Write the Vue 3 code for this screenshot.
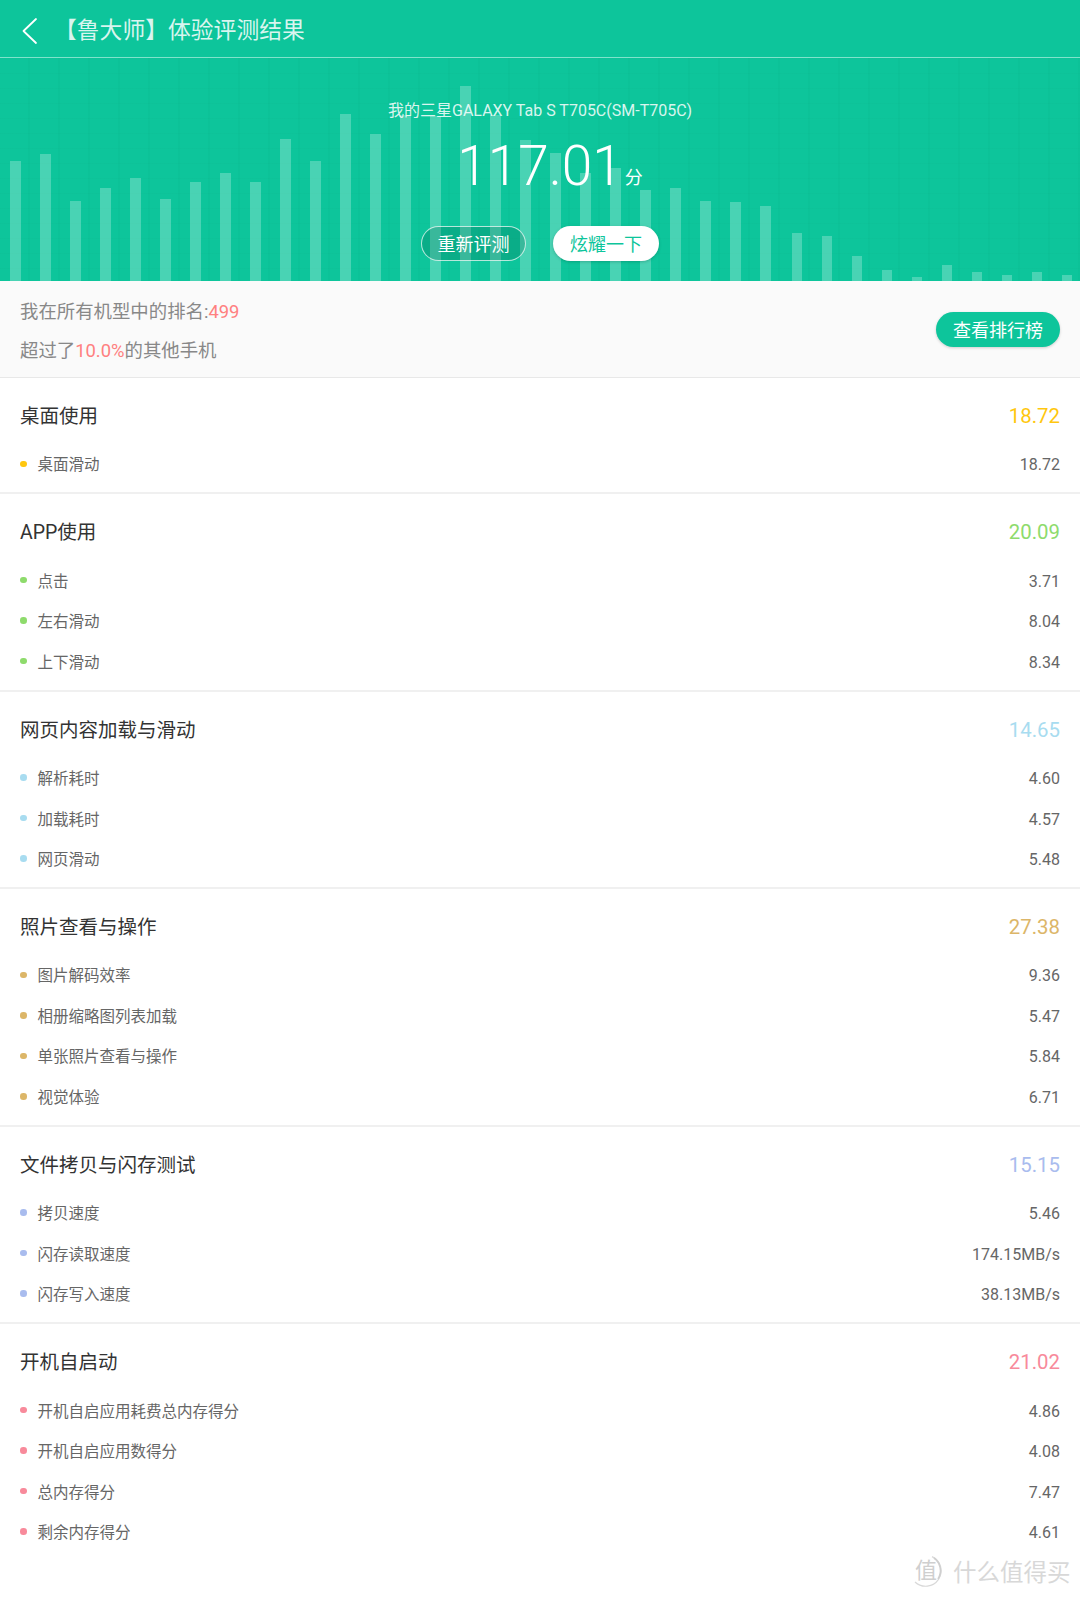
<script setup>
const tops = [161,154,201,188,178,199,182,173,182,139,161,114,134,115,116,86,115,140,153,173,168,190,188,201,202,206,233,236,256,270,277,265,272,275,272,275]
const bars = tops.map((t, i) => ({
  left: 10.3 + i * 30 + (i >= 26 ? 1.6 : 0),
  height: 281 - t
}))
const sections = [
  { name: '桌面使用', score: '18.72', color: '#ffc70f', items: [['桌面滑动', '18.72']] },
  { name: 'APP使用', score: '20.09', color: '#8edb6c', items: [['点击', '3.71'], ['左右滑动', '8.04'], ['上下滑动', '8.34']] },
  { name: '网页内容加载与滑动', score: '14.65', color: '#a8dcf0', items: [['解析耗时', '4.60'], ['加载耗时', '4.57'], ['网页滑动', '5.48']] },
  { name: '照片查看与操作', score: '27.38', color: '#dcb668', items: [['图片解码效率', '9.36'], ['相册缩略图列表加载', '5.47'], ['单张照片查看与操作', '5.84'], ['视觉体验', '6.71']] },
  { name: '文件拷贝与闪存测试', score: '15.15', color: '#a9bcee', items: [['拷贝速度', '5.46'], ['闪存读取速度', '174.15MB/s'], ['闪存写入速度', '38.13MB/s']] },
  { name: '开机自启动', score: '21.02', color: '#f88a9b', items: [['开机自启应用耗费总内存得分', '4.86'], ['开机自启应用数得分', '4.08'], ['总内存得分', '7.47'], ['剩余内存得分', '4.61']] }
]
</script>

<template>
  <div class="page">
    <header class="topbar">
      <svg class="back" width="18" height="28" viewBox="0 0 18 28" fill="none">
        <path d="M15 2 L2.5 14 L15 26" stroke="#fff" stroke-width="1.8" stroke-linecap="round" stroke-linejoin="round" />
      </svg>
      <span class="topbar-title">【鲁大师】体验评测结果</span>
    </header>

    <section class="hero">
      <div class="grid"></div>
      <div v-for="(b, i) in bars" :key="i" class="bar" :style="{ left: b.left + 'px', height: b.height + 'px' }"></div>
      <div class="hero-content">
        <div class="device">我的三星GALAXY Tab S T705C(SM-T705C)</div>
        <div class="score">117.01<span class="unit">分</span></div>
        <div class="hero-actions">
          <button class="pill pill-ghost">重新评测</button>
          <button class="pill pill-white">炫耀一下</button>
        </div>
      </div>
    </section>

    <section class="rank">
      <div class="rank-text">
        <div>我在所有机型中的排名:<span class="hot">499</span></div>
        <div>超过了<span class="hot">10.0%</span>的其他手机</div>
      </div>
      <button class="pill pill-green">查看排行榜</button>
    </section>

    <section v-for="s in sections" :key="s.name" class="group">
      <div class="group-head">
        <span class="group-name">{{ s.name }}</span>
        <span class="group-score" :style="{ color: s.color }">{{ s.score }}</span>
      </div>
      <div v-for="it in s.items" :key="it[0]" class="row">
        <span class="dot" :style="{ background: s.color }"></span>
        <span class="row-name">{{ it[0] }}</span>
        <span class="row-val">{{ it[1] }}</span>
      </div>
    </section>

    <div class="watermark">
      <svg class="wm-logo" width="36" height="36" viewBox="0 0 36 36" fill="none">
        <path d="M24 3.6 A15.5 15.5 0 1 1 7 29" stroke="#d9d9d9" stroke-width="1.2" />
        <path d="M26 5 A15.5 15.5 0 0 1 30 26" stroke="#cfcfcf" stroke-width="1.6" />
      </svg>
      <span class="wm-zhi">值</span>
      <span class="wm-text">什么值得买</span>
    </div>
  </div>
</template>

<style>
html, body { margin: 0; background: #fff; }
</style>

<style scoped>
.page {
  position: relative;
  width: 1080px;
  height: 1598px;
  overflow: hidden;
  background: #fff;
  font-family: Roboto, "Noto Sans CJK SC", sans-serif;
}
.topbar {
  display: flex;
  align-items: center;
  height: 57px;
  padding-left: 21px;
  background: #0dc59b;
  border-bottom: 1px solid #7fe3cb;
}
.back {
  flex: none;
  margin-top: 5px;
}
.topbar-title {
  margin-left: 15px;
  padding-top: 4px;
  font-size: 22.8px;
  line-height: 56px;
  color: rgba(255, 255, 255, 0.85);
}
.hero {
  position: relative;
  height: 223px;
  background: #0dc59b;
  overflow: hidden;
}
.grid {
  position: absolute;
  inset: 0;
  background-image:
    linear-gradient(90deg, transparent 0 28px, rgba(0, 120, 90, 0.045) 28px 30px),
    linear-gradient(0deg, transparent 0 14px, rgba(0, 120, 90, 0.03) 14px 15px);
  background-size: 30px 100%, 100% 15px;
}
.bar {
  position: absolute;
  bottom: 0;
  width: 10.6px;
  background: rgba(255, 255, 255, 0.25);
}
.hero-content {
  position: relative;
  display: flex;
  flex-direction: column;
  align-items: center;
  padding-top: 41px;
}
.device {
  font-size: 16px;
  line-height: 24px;
  color: rgba(255, 255, 255, 0.85);
}
.score {
  position: relative;
  margin-top: 12px;
  font-size: 55px;
  font-weight: 300;
  line-height: 62px;
  color: #fff;
}
.unit {
  position: absolute;
  left: 100%;
  bottom: 7px;
  margin-left: 2px;
  font-size: 18px;
  line-height: 24px;
  font-weight: 400;
}
.hero-actions {
  display: flex;
  gap: 27px;
  margin-top: 29px;
}
.pill {
  display: block;
  box-sizing: border-box;
  height: 35px;
  padding: 2px 0 0;
  border: none;
  border-radius: 18px;
  font-family: inherit;
  font-size: 18px;
  line-height: 31px;
  text-align: center;
}
.pill-ghost {
  width: 105px;
  color: #fff;
  background: rgba(0, 90, 70, 0.22);
  border: 1px solid rgba(255, 255, 255, 0.7);
}
.pill-white {
  width: 106px;
  color: #0dc59b;
  background: #fff;
  box-shadow: 0 1px 3px rgba(0, 60, 45, 0.25);
}
.pill-green {
  width: 124px;
  color: #fff;
  background: #0dc59b;
  box-shadow: 0 1px 3px rgba(0, 0, 0, 0.18);
}
.rank {
  display: flex;
  align-items: center;
  justify-content: space-between;
  height: 96px;
  padding: 0 20px;
  background: #fafafa;
  border-bottom: 1px solid #e8e8e8;
}
.rank-text {
  padding-top: 6px;
  font-size: 18.4px;
  line-height: 38.7px;
  color: #888;
}
.hot { color: #ff8080; }
.group {
  padding: 18px 20px 6.75px;
  border-bottom: 2px solid #f0f0f0;
}
.group:last-of-type { border-bottom: none; }
.group-head {
  display: flex;
  justify-content: space-between;
  align-items: center;
  height: 40px;
  margin-bottom: 9.1px;
}
.group-name {
  padding-bottom: 3px;
  font-size: 19.5px;
  color: #333;
}
.group-score { font-size: 20.4px; }
.row {
  display: flex;
  align-items: center;
  height: 40.5px;
  font-size: 15.5px;
  color: #666;
}
.dot {
  flex: none;
  width: 6.5px;
  height: 6.5px;
  margin-top: -3px;
  margin-right: 11px;
  border-radius: 50%;
}
.row-name {
  flex: 1;
  padding-bottom: 4px;
}
.row-val {
  padding-bottom: 1px;
  font-size: 16px;
}
.watermark {
  position: absolute;
  left: 908px;
  top: 1553px;
  display: flex;
  align-items: center;
  height: 36px;
}
.wm-logo { flex: none; }
.wm-zhi {
  position: absolute;
  left: 7px;
  top: 4px;
  font-size: 22px;
  line-height: 28px;
  color: #cfcfcf;
}
.wm-text {
  margin-left: 9px;
  font-size: 23.5px;
  color: #d8d8d8;
  white-space: nowrap;
}
</style>
